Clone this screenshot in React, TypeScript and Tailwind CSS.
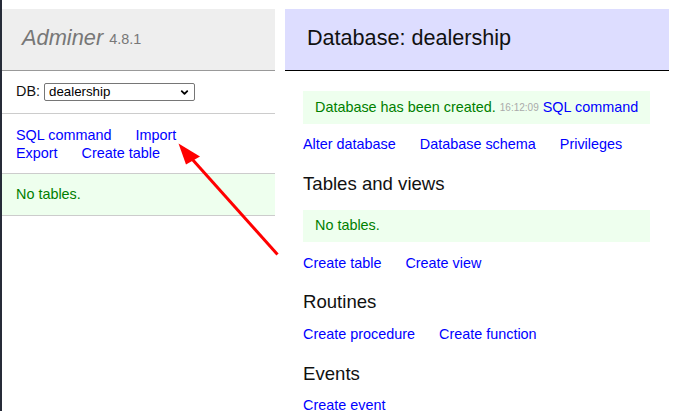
import { ChevronDown } from 'lucide-react';

const font = "font-['Liberation_Sans',Arial,sans-serif]";

const Links = ({ items, className = '' }: { items: string[]; className?: string }) => (
  <div className={`flex flex-wrap gap-x-[24px] leading-[18px] ${className}`}>
    {items.map((t) => (
      <a key={t} href="#" className="text-[#0000ff] whitespace-nowrap">
        {t}
      </a>
    ))}
  </div>
);

const Heading = ({ children, className = '' }: { children: string; className?: string }) => (
  <h3 className={`text-[18.6px] leading-[23px] text-[#111] ${className}`}>{children}</h3>
);

const App = () => (
  <div className={`relative flex h-[411px] w-[688px] overflow-hidden bg-white text-[14.4px] ${font}`}>
    <div className="w-[2px] shrink-0 bg-[#262b38]" />

    {/* menu */}
    <div className="w-[273px] shrink-0 pt-[9px]">
      <div className="flex h-[62px] items-center border-b border-[#999] bg-[#eee] pb-[2px] pl-[20px]">
        <span className="text-[21.8px] italic text-[#777]">Adminer</span>
        <span className="ml-[6px] mt-[3px] text-[14.4px] text-[#777]">4.8.1</span>
      </div>
      <div className="flex h-[43px] items-center border-b border-[#ccc] pl-[14px]">
        <span className="text-[#111]">DB:</span>
        <div className="relative ml-[4px]">
          <select
            defaultValue="dealership"
            className="block h-[18px] w-[151px] appearance-none rounded-[2px] border border-[#767676] bg-white pl-[4px] text-[13.3px] leading-[16px] text-black"
          >
            <option>dealership</option>
          </select>
          <ChevronDown className="pointer-events-none absolute right-[5px] top-[4px] h-[11px] w-[11px] text-black" strokeWidth={4} />
        </div>
      </div>
      <div className="h-[60px] border-b border-[#ccc] pl-[14px] pt-[12px]">
        <Links items={['SQL command', 'Import', 'Export', 'Create table']} className="w-[215px]" />
      </div>
      <div className="flex h-[42px] items-center border-b border-[#ccc] bg-[#efe] pl-[14px] text-[#008000]">
        No tables.
      </div>
    </div>

    {/* content */}
    <div className="ml-[10px] w-[384px] shrink-0 pt-[9px]">
      <div className="flex h-[62px] items-center border-b border-black bg-[#ddf] pb-[3px] pl-[22px]">
        <h2 className="text-[21.6px] text-[#111]">Database: dealership</h2>
      </div>
      <div className="pl-[18px] pr-[19px]">
        <div className="mt-[20px] flex h-[33px] items-center bg-[#efe] pl-[12px] text-[#008000]">
          Database has been created.
          <span className="ml-[4px] text-[10px] text-[#aaa]">16:12:09</span>
          <a href="#" className="ml-[4px] text-[#0000ff]">SQL command</a>
        </div>
        <Links items={['Alter database', 'Database schema', 'Privileges']} className="mt-[11px]" />
        <Heading className="mt-[19px]">Tables and views</Heading>
        <div className="mt-[15px] flex h-[32px] items-center bg-[#efe] pl-[12px] text-[#008000]">No tables.</div>
        <Links items={['Create table', 'Create view']} className="mt-[12px]" />
        <Heading className="mt-[18px]">Routines</Heading>
        <Links items={['Create procedure', 'Create function']} className="mt-[12px]" />
        <Heading className="mt-[19px]">Events</Heading>
        <Links items={['Create event']} className="mt-[11px]" />
      </div>
    </div>

    {/* annotation arrow */}
    <svg className="pointer-events-none absolute left-0 top-0" width="688" height="411" viewBox="0 0 688 411">
      <line x1="277.5" y1="254.5" x2="192" y2="159" stroke="#ff0000" strokeWidth="3" />
      <polygon points="178.5,143.5 186,164.5 200,156.5" fill="#ff0000" />
    </svg>
  </div>
);

export default App;
